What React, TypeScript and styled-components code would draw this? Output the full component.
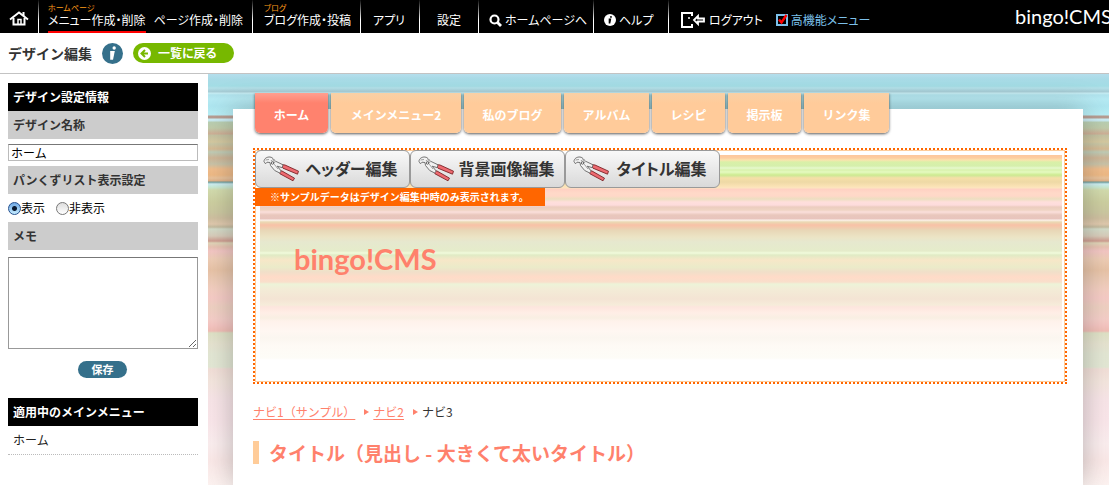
import React from "react";
import styled, { createGlobalStyle, css } from "styled-components";

const GlobalStyle = createGlobalStyle`
  *, *::before, *::after { box-sizing: border-box; }
  body {
    margin: 0;
    background: #fff;
    color: #333;
    font-family: "Noto Sans CJK JP", sans-serif;
    font-size: 12px;
    line-height: 18px;
    overflow-x: hidden;
  }
  button, input, textarea { font-family: inherit; }
  h1, h2, p, ol { margin: 0; padding: 0; }
`;

/* offset in px from the top of the stripe block, colour */
type Stripe = [number, string];
const stripes = (list: Stripe[]) =>
  `linear-gradient(180deg, ${list.map(([y, c]) => `${c} ${y}px`).join(", ")})`;

const pageStripes = stripes([
  [0, "#b5deec"], [5, "#a9dbe7"], [12, "#a3dde5"], [14, "#b3e0e8"], [17, "#a8cfd8"],
  [18, "#a6cbd4"], [19, "#c8edf3"], [21, "#b0e3ed"], [25, "#b6eaf3"], [32, "#aee6f0"],
  [37, "#b3ebf3"], [41, "#b8eef6"], [42, "#b79d92"], [44, "#b79d92"], [45, "#cdf0f6"],
  [47, "#c8e8ee"], [48, "#b9cfb2"], [54, "#c0ccaa"], [60, "#cfae95"], [61, "#c4c2a2"],
  [68, "#d5c9a0"], [70, "#c9c7a5"], [75, "#d6ba94"], [78, "#bfccb6"], [84, "#cfb596"],
  [90, "#c8c3a8"], [95, "#f0bd8c"], [101, "#eeb985"], [104, "#e9c39c"], [107, "#e0b188"],
  [108, "#6f9c9a"], [110, "#cdeef2"], [113, "#c8ead6"], [116, "#d3dcae"], [128, "#cdcfa0"],
  [138, "#cbc8a0"], [144, "#cfc0a0"], [150, "#e0c9ad"], [153, "#c4bb9f"], [155, "#d3dcc9"],
  [162, "#d8ccba"], [167, "#cf9d90"], [169, "#e0d5b8"], [173, "#e8c2b2"], [177, "#f3c6c4"],
  [185, "#eecdb6"], [196, "#e8c3a6"], [205, "#eccab4"], [215, "#f3cec0"], [224, "#f6cbc6"],
  [233, "#efd1c2"], [245, "#f5cec8"], [251, "#f5c6c2"], [257, "#f1beb6"], [259, "#dfe2c6"],
  [270, "#e6e3d0"], [280, "#e3e7d4"], [293, "#e3e8d5"], [295, "#f2dfd8"], [308, "#f4e6de"],
  [325, "#f8e5e8"], [345, "#fae6ea"], [370, "#fbeeef"], [386, "#fbe9e8"], [412, "#fdf3f1"],
  [440, "#ffffff"],
]);

const heroStripes = stripes([
  [0, "#fdc79c"], [3, "#fdcda0"], [5, "#fbe3ae"], [7, "#d9f0a8"], [11, "#d5efac"],
  [13, "#e6f8cd"], [15, "#d9f2ad"], [17, "#e5fac0"], [20, "#cdeb90"], [21, "#d5e69b"],
  [23, "#f6dfa8"], [27, "#eed9a6"], [31, "#fae2b4"], [33, "#fde5c0"], [34, "#ffd0c2"],
  [38, "#ffd9c8"], [41, "#ffd8c8"], [44, "#ecdfc0"], [47, "#ffdfdc"], [50, "#fddcdc"],
  [52, "#eccdbf"], [55, "#efd4c3"], [57, "#fbdfdb"], [60, "#e9c7bc"], [64, "#e8c4bd"],
  [65, "#fdf3ee"], [67, "#ead9b3"], [70, "#f8c1a7"], [72, "#f3c9ac"], [75, "#e8d6b6"],
  [82, "#ece4c5"], [87, "#e6e8cf"], [96, "#e5ecca"], [98, "#f1fbdc"], [100, "#e0ebc5"],
  [105, "#f7e7c8"], [112, "#ebebc9"], [117, "#f1dfc9"], [122, "#ffdbc8"], [127, "#f9dfcb"],
  [129, "#edf3d8"], [134, "#f3ecd7"], [144, "#f4e4d4"], [150, "#f6ecda"], [152, "#fde5de"],
  [158, "#ffeee6"], [163, "#f8efe3"], [166, "#fff2eb"], [176, "#fff7f2"], [183, "#fbf6f0"],
  [190, "#fefaf5"], [203, "#fdfcf7"], [205, "#ffffff"],
]);

const Page = styled.div`
  display: flex;
  flex-direction: column;
  min-height: 100vh;
`;

const TopBar = styled.header`
  display: flex;
  height: 33px;
  background: #000;
  color: #fff;
  overflow: hidden;
`;

const MenuGroup = styled.div<{ $width: number; $pad?: number; $gap?: number; $last?: boolean }>`
  display: flex;
  align-items: flex-end;
  flex: 0 0 ${(p) => p.$width}px;
  padding-left: ${(p) => p.$pad ?? 0}px;
  gap: ${(p) => p.$gap ?? 8}px;
  ${(p) =>
    !p.$last &&
    css`
      border-right: 1px solid;
      border-image: linear-gradient(#000, #fff 60%) 1;
    `}
`;

const MenuLink = styled.a<{ $active?: boolean; $accent?: boolean }>`
  display: flex;
  flex-direction: column;
  justify-content: flex-end;
  height: 33px;
  padding-bottom: 3px;
  border-bottom: 2px solid ${(p) => (p.$active ? "#f00" : "transparent")};
  color: ${(p) => (p.$accent ? "#7cc0ea" : "#fff")};
  font-size: 12px;
  line-height: 16px;
  white-space: nowrap;
  text-decoration: none;
  font-feature-settings: "palt";
`;

const MenuCaption = styled.small`
  color: #ff9c1a;
  font-size: 8px;
  line-height: 8px;
`;

const IconLabel = styled.span<{ $gap?: number }>`
  display: flex;
  align-items: center;
  gap: ${(p) => p.$gap ?? 3}px;
`;

const Brand = styled.div`
  flex: 0 0 94px;
  margin-left: auto;
  font: 20px/33px Lato, sans-serif;
  overflow: hidden;
  white-space: nowrap;
`;

const TitleBar = styled.div`
  display: flex;
  align-items: center;
  height: 41px;
  padding: 0 8px;
  border-bottom: 1px solid #c3c3c3;
`;

const PageTitle = styled.h1`
  font-size: 14px;
  line-height: 20px;
  margin-right: 10px;
`;

const BackLink = styled.a`
  display: flex;
  align-items: center;
  gap: 7px;
  width: 101px;
  height: 20px;
  margin-left: 10px;
  padding-left: 5px;
  border-radius: 10px;
  background: #77b800;
  color: #fff;
  font-size: 12px;
  font-weight: bold;
  text-decoration: none;
  font-feature-settings: "palt";
`;

const Columns = styled.div`
  display: flex;
  flex: 1;
  align-items: stretch;
`;

const Sidebar = styled.aside`
  flex: 0 0 208px;
  padding: 9px 10px 0 8px;
`;

const band = css<{ $dark?: boolean }>`
  display: block;
  padding: 0 5px;
  background: ${(p) => (p.$dark ? "#000" : "#ccc")};
  color: ${(p) => (p.$dark ? "#fff" : "#333")};
  font-size: 12px;
  font-weight: bold;
  line-height: 28px;
`;
const BandHeading = styled.h2<{ $dark?: boolean }>`${band}`;
const BandLabel = styled.label<{ $dark?: boolean }>`${band}`;

const NameInput = styled.input`
  display: block;
  width: 100%;
  height: 17px;
  margin: 5px 0;
  padding: 0 2px;
  border: 1px solid #bbb;
  border-top-color: #777;
  font-size: 12px;
  line-height: 15px;
  color: #000;
`;

const RadioRow = styled.div`
  display: flex;
  gap: 11px;
  height: 28px;
  align-items: center;
  color: #000;
`;

const RadioLabel = styled.label`
  display: flex;
  align-items: center;
`;

const Radio = styled.input`
  appearance: none;
  width: 13px;
  height: 13px;
  margin: 0;
  border: 1px solid #777;
  border-radius: 50%;
  background: linear-gradient(#ddd, #fff);
  &:checked {
    border-color: #24508f;
    background: radial-gradient(circle, #0a1a30 0 2px, transparent 3px),
      linear-gradient(#6fa8e4, #c4ecff);
  }
`;

const Memo = styled.textarea`
  display: block;
  width: 100%;
  height: 92px;
  margin: 7px 0 12px;
  border: 1px solid #999;
  border-top-color: #777;
  resize: vertical;
`;

const SaveButton = styled.button`
  display: block;
  width: 49px;
  height: 17px;
  margin: 0 auto 20px 70px;
  padding: 0;
  border: 0;
  border-radius: 9px;
  background: #35708b;
  color: #fff;
  font-size: 11px;
  font-weight: bold;
  line-height: 17px;
`;

const MenuEntry = styled.p`
  padding: 0 5px;
  border-bottom: 1px dotted #bbb;
  color: #222;
  line-height: 28px;
`;

const Canvas = styled.main`
  display: flex;
  flex-direction: column;
  flex: 1;
  min-width: 0;
  padding: 35px 26px 0 25px;
  background: ${pageStripes};
  overflow: hidden;
`;

const Panel = styled.div`
  flex: 1;
  padding: 0 16px 0 20px;
  background: #fff;
  box-shadow: 0 0 26px rgba(60, 60, 60, 0.34);
`;

const Tabs = styled.nav`
  display: flex;
  gap: 3px;
  margin: -16px 0 15px 2px;
`;

const Tab = styled.a<{ $width: number; $active?: boolean }>`
  flex: 0 0 ${(p) => p.$width}px;
  height: 40px;
  border-radius: 0 0 5px 5px;
  background: ${(p) =>
    p.$active
      ? "linear-gradient(#ff9f90, #ff826e 10px)"
      : "linear-gradient(#f8d0a6, #ffcb9a 10px)"};
  box-shadow: 0 1px 3px rgba(0, 0, 0, 0.65);
  clip-path: inset(0 -4px -5px -4px);
  color: #fff;
  font-weight: bold;
  line-height: 44px;
  text-align: center;
  white-space: nowrap;
  text-decoration: none;
`;

const Hero = styled.section`
  position: relative;
  height: 236px;
  border: 2px dotted #f60;
`;

const HeroFrame = styled.div`
  height: 100%;
  padding: 4px 2px 4px 4px;
  border: 1px solid #fc9;
`;

const HeroImage = styled.div`
  height: 100%;
  padding: 84px 0 0 34px;
  background: ${heroStripes};
`;

const HeroName = styled.p`
  color: #ff816c;
  font: bold 29px/40px Lato, sans-serif;
`;

const EditTools = styled.div`
  position: absolute;
  top: 0;
  left: 0;
`;

const EditRow = styled.div`
  display: flex;
`;

const EditButton = styled.button`
  display: flex;
  align-items: center;
  width: 155px;
  height: 38px;
  padding: 0 7px;
  border: 1px solid #999;
  border-radius: 6px;
  background: linear-gradient(#f9f9f9, #d9d9d9);
  color: #333;
  font-size: 16px;
  font-weight: bold;
  line-height: 22px;
  font-feature-settings: "palt";
`;

const EditText = styled.span`
  flex: 1;
  padding-bottom: 2px;
  text-align: center;
  white-space: nowrap;
`;

const SampleNote = styled.p`
  width: 290px;
  padding-left: 15px;
  background: #f60;
  color: #fff;
  font-size: 10px;
  font-weight: bold;
  line-height: 18px;
  white-space: nowrap;
`;

const Crumbs = styled.ol`
  display: flex;
  margin: 19px 0 20px;
  list-style: none;
`;

const Crumb = styled.li`
  display: flex;
  align-items: center;
  & + &::before {
    content: "";
    margin: 0 4px 0 9px;
    border: 3px solid transparent;
    border-left: 5px solid #ff816c;
    border-right: 0;
  }
  a { color: #ff816c; text-underline-offset: 2px; }
`;

const Headline = styled.h2`
  padding-left: 10px;
  border-left: 6px solid #fc9;
  color: #ff816c;
  font-size: 19px;
  line-height: 23px;
`;

const HomeIcon = () => (
  <svg width="20" height="17" viewBox="0 0 20 17" fill="none" stroke="#fff" strokeWidth="2">
    <path d="M1 8.500 10 1.500l9 7" />
    <path d="M4.500 7v6.500h11V7M14.500 1v4" />
    <path d="M9 13V8.500h3V13" strokeWidth="1.500" />
  </svg>
);

const SearchIcon = () => (
  <svg width="13" height="13" viewBox="0 0 13 13" fill="none" stroke="#fff">
    <circle cx="5.500" cy="5.500" r="4" strokeWidth="2.200" />
    <path d="m8.500 8.500 3.500 3.500" strokeWidth="2.800" />
  </svg>
);

const InfoGlyph = ({ size, disc, mark }: { size: number; disc: string; mark: string }) => (
  <svg width={size} height={size} viewBox="0 0 20 20">
    <circle cx="10" cy="10" r="10" fill={disc} />
    <path d="M7.800 7.500h4.400l-1.700 8.500H7.800z" fill={mark} />
    <circle cx="11.600" cy="4.800" r="1.600" fill={mark} />
  </svg>
);

const ExitIcon = () => (
  <svg width="25" height="16" viewBox="0 0 25 16" fill="none" stroke="#fff">
    <path d="M11 4V1H1v14h10v-3" strokeWidth="2" />
    <path d="M13 8 17 4v2.500h6v3h-6V12z" strokeWidth="1.800" />
    <circle cx="8" cy="6" r="1" fill="#fff" stroke="none" />
  </svg>
);

const CheckIcon = () => (
  <svg width="12" height="12" viewBox="0 0 12 12" fill="none">
    <path d="M1 1h10v10H1z" stroke="#7cc0ea" strokeWidth="2" />
    <path d="M3 5.500 5.500 8.500 10.500 1" stroke="#f00" strokeWidth="2.400" />
  </svg>
);

const BackIcon = () => (
  <svg width="13" height="13" viewBox="0 0 13 13">
    <circle cx="6.500" cy="6.500" r="6.500" fill="#fff" />
    <path d="M7 3 3.500 6.500 7 10M3.500 6.500H10" fill="none" stroke="#77b800" strokeWidth="2" />
  </svg>
);

const PliersIcon = () => (
  <svg width="38" height="26" viewBox="0 0 38 26" fill="none" strokeLinejoin="round">
    <path d="M17.500 8.500 22 9l13.500 6.200-1 3L20 12.200z" fill="#ee6a70" stroke="#7c2226" strokeWidth=".9" />
    <path d="M15.500 14.500 19 15l12.500 7.200-1.500 2.600L17 17.800z" fill="#ee6a70" stroke="#7c2226" strokeWidth=".9" />
    <path
      d="M1 5.500C1 2.500 4 .8 7 1c3 .3 3.500 2.800 5.500 4.200L20 8.800l-.8 2.800-5-1.400 4 4.800-1.500 2-5-2.500L7.500 9.500 7 6.500 4 6.200 2.500 7.800z"
      fill="#f2f2f2"
      stroke="#666"
      strokeWidth=".9"
    />
    <path d="M2.500 4 6 3.500M8 4l3.500 4.500 3.500 4.500M9.500 3.500 12 7" stroke="#888" strokeWidth=".8" />
    <circle cx="9.500" cy="7" r="1.200" fill="#fff" stroke="#444" strokeWidth=".8" />
  </svg>
);

const tabs: [string, number][] = [
  ["ホーム", 73],
  ["メインメニュー2", 130],
  ["私のブログ", 97],
  ["アルバム", 85],
  ["レシピ", 73],
  ["掲示板", 73],
  ["リンク集", 85],
];
const tools = ["ヘッダー編集", "背景画像編集", "タイトル編集"];

export default function App() {
  return (
    <Page>
      <GlobalStyle />
      <TopBar>
        <MenuGroup $width={39} $pad={9}>
          <MenuLink href="#" aria-label="Home"><IconLabel><HomeIcon /></IconLabel></MenuLink>
        </MenuGroup>
        <MenuGroup $width={214} $pad={9}>
          <MenuLink href="#" $active>
            <MenuCaption>ホームページ</MenuCaption>
            メニュー作成・削除
          </MenuLink>
          <MenuLink href="#">ページ作成・削除</MenuLink>
        </MenuGroup>
        <MenuGroup $width={108} $pad={11}>
          <MenuLink href="#">
            <MenuCaption>ブログ</MenuCaption>
            ブログ作成・投稿
          </MenuLink>
        </MenuGroup>
        <MenuGroup $width={59} $pad={12}><MenuLink href="#">アプリ</MenuLink></MenuGroup>
        <MenuGroup $width={59} $pad={17}><MenuLink href="#">設定</MenuLink></MenuGroup>
        <MenuGroup $width={115} $pad={10}>
          <MenuLink href="#"><IconLabel><SearchIcon />ホームページへ</IconLabel></MenuLink>
        </MenuGroup>
        <MenuGroup $width={75} $pad={10}>
          <MenuLink href="#">
            <IconLabel><InfoGlyph size={12} disc="#fff" mark="#000" />ヘルプ</IconLabel>
          </MenuLink>
        </MenuGroup>
        <MenuGroup $width={220} $pad={12} $gap={13} $last>
          <MenuLink href="#"><IconLabel><ExitIcon />ログアウト</IconLabel></MenuLink>
          <MenuLink href="#" $accent><IconLabel><CheckIcon />高機能メニュー</IconLabel></MenuLink>
        </MenuGroup>
        <Brand>bingo!CMS</Brand>
      </TopBar>

      <TitleBar>
        <PageTitle>デザイン編集</PageTitle>
        <InfoGlyph size={21} disc="#35708b" mark="#fff" />
        <BackLink href="#"><BackIcon />一覧に戻る</BackLink>
      </TitleBar>

      <Columns>
        <Sidebar>
          <form onSubmit={(e) => e.preventDefault()}>
            <BandHeading $dark>デザイン設定情報</BandHeading>
            <BandLabel htmlFor="design-name">デザイン名称</BandLabel>
            <NameInput id="design-name" defaultValue="ホーム" />
            <BandHeading id="crumb-setting">パンくずリスト表示設定</BandHeading>
            <RadioRow role="radiogroup" aria-labelledby="crumb-setting">
              <RadioLabel><Radio type="radio" name="crumbs" defaultChecked />表示</RadioLabel>
              <RadioLabel><Radio type="radio" name="crumbs" />非表示</RadioLabel>
            </RadioRow>
            <BandLabel htmlFor="memo">メモ</BandLabel>
            <Memo id="memo" />
            <SaveButton>保存</SaveButton>
          </form>
          <BandHeading $dark>適用中のメインメニュー</BandHeading>
          <MenuEntry>ホーム</MenuEntry>
        </Sidebar>

        <Canvas>
          <Panel>
            <Tabs>
              {tabs.map(([name, width], i) => (
                <Tab key={name} href="#" $width={width} $active={i === 0}>{name}</Tab>
              ))}
            </Tabs>
            <Hero>
              <HeroFrame>
                <HeroImage><HeroName>bingo!CMS</HeroName></HeroImage>
              </HeroFrame>
              <EditTools>
                <EditRow>
                  {tools.map((name) => (
                    <EditButton key={name} type="button">
                      <PliersIcon />
                      <EditText>{name}</EditText>
                    </EditButton>
                  ))}
                </EditRow>
                <SampleNote>※サンプルデータはデザイン編集中時のみ表示されます。</SampleNote>
              </EditTools>
            </Hero>
            <Crumbs>
              <Crumb><a href="#">ナビ1（サンプル）</a></Crumb>
              <Crumb><a href="#">ナビ2</a></Crumb>
              <Crumb>ナビ3</Crumb>
            </Crumbs>
            <Headline>タイトル（見出し - 大きくて太いタイトル）</Headline>
          </Panel>
        </Canvas>
      </Columns>
    </Page>
  );
}
